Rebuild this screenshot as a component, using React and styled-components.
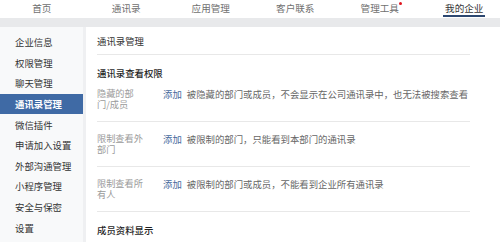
import React from 'react'
import styled, { createGlobalStyle } from 'styled-components'

const GlobalStyle = createGlobalStyle`
  html, body {
    margin: 0;
    padding: 0;
    background: #ffffff;
    font-family: "Noto Sans CJK SC", "Noto Sans", sans-serif;
  }
`

const Page = styled.div`
  width: 500px;
  height: 242px;
  overflow: hidden;
  display: flex;
  flex-direction: column;
`

const TopNav = styled.div`
  height: 18px;
  display: grid;
  grid-template-columns: repeat(6, 84.5px);
  margin-left: -0.5px;
  background: #ffffff;
`

const NavCell = styled.div`
  display: flex;
  justify-content: center;
  align-items: flex-start;
`

const NavLabel = styled.span`
  position: relative;
  font-size: 9.6px;
  line-height: 10px;
  padding: 3px 2px 2px;
  color: ${p => (p.$active ? '#333333' : '#707070')};
  border-bottom: 2px solid ${p => (p.$active ? '#2c4770' : 'transparent')};
`

const RedDot = styled.i`
  position: absolute;
  right: -1px;
  top: 2px;
  width: 3px;
  height: 3px;
  border-radius: 50%;
  background: #e0141e;
`

const Band = styled.div`
  height: 9px;
  background: #e8e9eb;
`

const Main = styled.div`
  flex: 1;
  display: flex;
  gap: 3px;
  background: #eff0f2;
`

const Sidebar = styled.div`
  width: 83px;
  padding-top: 5px;
  background: #f8f9fa;
`

const SideItem = styled.div`
  height: 20.6px;
  display: flex;
  align-items: center;
  padding-left: 15px;
  font-size: 9.4px;
  color: ${p => (p.$active ? '#ffffff' : '#333333')};
  background: ${p => (p.$active ? '#3f6aa5' : 'transparent')};
  font-weight: ${p => (p.$active ? 600 : 400)};
`

const Content = styled.div`
  flex: 1;
  background: #ffffff;
  padding-left: 11px;
`

const Inner = styled.div`
  width: 373px;
`

const PageTitle = styled.div`
  font-size: 9.4px;
  line-height: 12px;
  color: #333333;
  padding: 8px 0 7px;
  border-bottom: 1px solid #e8e8e8;
`

const SectionTitle = styled.div`
  font-size: 9.4px;
  line-height: 8px;
  color: #1f1f1f;
  font-weight: 500;
  margin-top: ${p => p.$top || 14}px;
`

const Row = styled.div`
  height: 32px;
  padding-top: 12px;
  display: flex;
  align-items: flex-start;
  border-bottom: 1px solid #e8e8e8;
`

const Label = styled.div`
  width: 66px;
  flex-shrink: 0;
  font-size: 9.2px;
  line-height: 11px;
  margin-top: -1px;
  color: #9a9a9a;
`

const AddLink = styled.span`
  flex-shrink: 0;
  font-size: 9.4px;
  line-height: 10px;
  color: #46699c;
  margin-right: 5px;
`

const Desc = styled.span`
  flex-shrink: 0;
  font-size: 9.4px;
  line-height: 10px;
  color: #666666;
  white-space: nowrap;
`

const navItems = ['首页', '通讯录', '应用管理', '客户联系', '管理工具', '我的企业']

const sideItems = [
  '企业信息',
  '权限管理',
  '聊天管理',
  '通讯录管理',
  '微信插件',
  '申请加入设置',
  '外部沟通管理',
  '小程序管理',
  '安全与保密',
  '设置',
]

const rules = [
  { label: ['隐藏的部', '门/成员'], desc: '被隐藏的部门或成员，不会显示在公司通讯录中，也无法被搜索查看' },
  { label: ['限制查看外', '部门'], desc: '被限制的部门，只能看到本部门的通讯录' },
  { label: ['限制查看所', '有人'], desc: '被限制的部门或成员，不能看到企业所有通讯录' },
]

const App = () => {
  return (
    <>
      <GlobalStyle />
      <Page>
        <TopNav>
          {navItems.map(item => (
            <NavCell key={item}>
              <NavLabel $active={item === '我的企业'}>
                {item}
                {item === '管理工具' && <RedDot />}
              </NavLabel>
            </NavCell>
          ))}
        </TopNav>
        <Band />
        <Main>
          <Sidebar>
            {sideItems.map(item => (
              <SideItem key={item} $active={item === '通讯录管理'}>
                {item}
              </SideItem>
            ))}
          </Sidebar>
          <Content>
            <Inner>
              <PageTitle>通讯录管理</PageTitle>
              <SectionTitle>通讯录查看权限</SectionTitle>
              {rules.map(r => (
                <Row key={r.desc}>
                  <Label>
                    {r.label[0]}
                    <br />
                    {r.label[1]}
                  </Label>
                  <AddLink>添加</AddLink>
                  <Desc>{r.desc}</Desc>
                </Row>
              ))}
              <SectionTitle $top={14}>成员资料显示</SectionTitle>
            </Inner>
          </Content>
        </Main>
      </Page>
    </>
  )
}

export default App
